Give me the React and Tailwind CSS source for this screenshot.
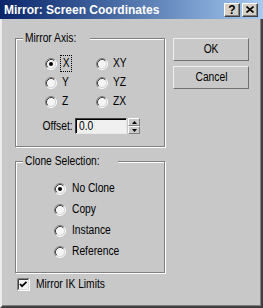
import React from "react";

function T({ children, origin = "origin-left" }) {
  return <span className={`inline-block ${origin} scale-x-[0.82] whitespace-nowrap`}>{children}</span>;
}

function Radio({ checked }) {
  return (
    <svg width="12" height="12" viewBox="0 0 12 12" className="shrink-0 block">
      <circle cx="6" cy="6" r="4.5" fill="#f4f4f4" />
      <path d="M2.11 9.89A5.5 5.5 0 0 1 9.89 2.11" stroke="#808080" fill="none" />
      <path d="M9.89 2.11A5.5 5.5 0 0 1 2.11 9.89" stroke="#ffffff" fill="none" />
      <path d="M2.82 9.18A4.5 4.5 0 0 1 9.18 2.82" stroke="#404040" fill="none" />
      <path d="M9.18 2.82A4.5 4.5 0 0 1 2.82 9.18" stroke="#d8d8d8" fill="none" />
      {checked && <circle cx="6" cy="6" r="2" fill="#000" />}
    </svg>
  );
}

function RadioRow({ label, checked, focus, h = "h-[19px]", gap = "ml-[5px]" }) {
  return (
    <div className={`flex items-center ${h}`}>
      <Radio checked={checked} />
      {focus ? (
        <span className="ml-[4px] w-[10px] h-[15px] flex items-center justify-center outline outline-1 outline-dotted outline-black">
          <T origin="origin-center">{label}</T>
        </span>
      ) : (
        <span className={`${gap} leading-[13px]`}>
          <T>{label}</T>
        </span>
      )}
    </div>
  );
}

function TitleButton({ children }) {
  return (
    <div className="w-[16px] h-[14px] bg-[#d4d0c8] border-t border-l border-t-white border-l-white border-b border-r border-b-[#404040] border-r-[#404040] shadow-[inset_-1px_-1px_0_#808080] flex items-center justify-center">
      {children}
    </div>
  );
}

function Button({ children }) {
  return (
    <div className="w-[76px] h-[23px] bg-[#c8c8c8] border border-t-[#f0f0f0] border-l-[#f0f0f0] border-b-[#707070] border-r-[#707070] flex items-center justify-center">
      <T origin="origin-center">{children}</T>
    </div>
  );
}

function Group({ title, className, children }) {
  return (
    <div className={`relative border border-[#808080] shadow-[inset_1px_1px_0_#fff,1px_1px_0_#fff] ${className}`}>
      <span className="absolute -top-[8px] left-[7px] px-[2px] h-[15px] flex items-center bg-[#c8c8c8]">
        <T>{title}</T>
      </span>
      {children}
    </div>
  );
}

export default function App() {
  return (
    <div className="w-[263px] h-[308px] flex flex-col bg-[#c8c8c8] overflow-hidden font-['Liberation_Sans',Arial,sans-serif]">
      <div className="h-[19px] shrink-0 flex items-center bg-gradient-to-r from-[#0a246a] to-[#a6caf0] pl-[4px] pr-[5px]">
        <span className="flex-1 text-white font-bold text-[12px] leading-[14px]">Mirror: Screen Coordinates</span>
        <div className="flex gap-[2px]">
          <TitleButton>
            <span className="font-bold text-[12px] leading-none text-black">?</span>
          </TitleButton>
          <TitleButton>
            <svg width="8" height="7" viewBox="0 0 8 7">
              <path d="M0.5 0.5L7.5 6.5M7.5 0.5L0.5 6.5" stroke="#000" strokeWidth="1.6" />
            </svg>
          </TitleButton>
        </div>
      </div>
      <div className="flex-1 flex border-l-[2px] border-l-[#ececec] border-r-[2px] border-r-[#404040] border-b-[2px] border-b-[#404040] shadow-[inset_-1px_-1px_0_#808080] pl-[13px] pt-[19px] text-[12.5px] leading-[13px] text-black">
        <div className="w-[150px] flex flex-col">
          <Group title="Mirror Axis:" className="pl-[29px] pt-[15px] pb-[12px]">
            <div className="grid grid-cols-[51px_1fr]">
              <RadioRow label="X" checked focus />
              <RadioRow label="XY" />
              <RadioRow label="Y" />
              <RadioRow label="YZ" />
              <RadioRow label="Z" />
              <RadioRow label="ZX" />
            </div>
            <div className="flex items-center mt-[7px] -ml-[29px]">
              <span className="w-[57px] text-right">
                <T origin="origin-right">Offset:</T>
              </span>
              <div className="ml-[2px] w-[52px] h-[16px] bg-[#f0f0f0] border border-t-[#404040] border-l-[#404040] border-b-[#e8e8e8] border-r-[#e8e8e8] shadow-[inset_1px_1px_0_#000] flex items-center pl-[3px]">
                <T>0.0</T>
              </div>
              <div className="ml-[1px] w-[12px] h-[16px] flex flex-col">
                <div className="flex-1 flex items-center justify-center bg-[#c8c8c8] border border-t-white border-l-white border-b-[#808080] border-r-[#808080]">
                  <svg width="5" height="3" viewBox="0 0 5 3"><path d="M2.5 0L5 3H0Z" fill="#000" /></svg>
                </div>
                <div className="flex-1 flex items-center justify-center bg-[#c8c8c8] border border-t-white border-l-white border-b-[#808080] border-r-[#808080]">
                  <svg width="5" height="3" viewBox="0 0 5 3"><path d="M0 0H5L2.5 3Z" fill="#000" /></svg>
                </div>
              </div>
            </div>
          </Group>
          <Group title="Clone Selection:" className="mt-[14px] pl-[38px] pt-[16px] pb-[10px]">
            <RadioRow label="No Clone" checked h="h-[21px]" gap="ml-[6px]" />
            <RadioRow label="Copy" h="h-[21px]" gap="ml-[6px]" />
            <RadioRow label="Instance" h="h-[21px]" gap="ml-[6px]" />
            <RadioRow label="Reference" h="h-[21px]" gap="ml-[6px]" />
          </Group>
          <div className="mt-[5px] ml-[2px] flex items-center h-[13px]">
            <svg width="13" height="13" viewBox="0 0 13 13" className="shrink-0 block">
              <rect x="0" y="0" width="13" height="13" fill="#fff" />
              <path d="M0.5 12.5V0.5H12.5" stroke="#808080" fill="none" />
              <path d="M1.5 11.5V1.5H11.5" stroke="#404040" fill="none" />
              <path d="M1.5 11.5H11.5V1.5" stroke="#d8d8d8" fill="none" />
              <rect x="2" y="2" width="9" height="9" fill="#f4f4f4" />
              <path d="M3 6l2 2.2L9.5 3.8" stroke="#000" strokeWidth="1.8" fill="none" />
            </svg>
            <span className="ml-[6px]">
              <T>Mirror IK Limits</T>
            </span>
          </div>
        </div>
        <div className="ml-[8px] flex flex-col gap-[5px]">
          <Button>OK</Button>
          <Button>Cancel</Button>
        </div>
      </div>
    </div>
  );
}
